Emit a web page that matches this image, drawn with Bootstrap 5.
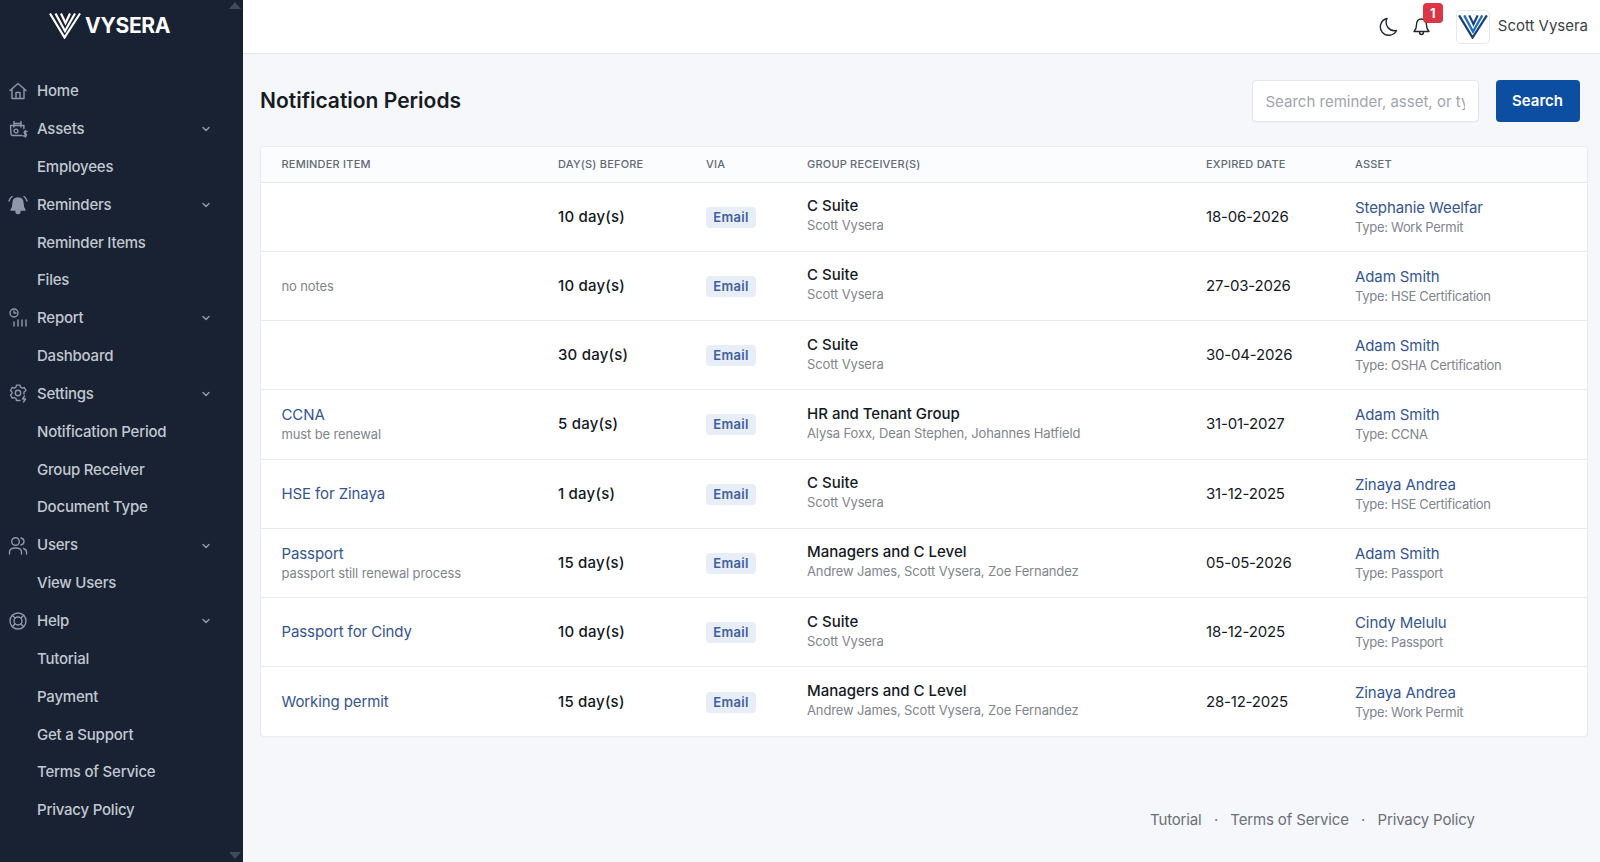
<!DOCTYPE html>
<html lang="en">
<head>
<meta charset="utf-8">
<title>Notification Periods</title>
<link href="https://cdn.jsdelivr.net/npm/bootstrap@5.3.0/dist/css/bootstrap.min.css" rel="stylesheet">
<style>
html,body{height:100%;overflow:hidden}
body{font-family:Inter,"Liberation Sans",sans-serif;background:#f5f7fb;color:#14181f;font-size:15px}
.shell{height:862px}
.side{width:243px;background:#182232;height:862px;flex:none;position:relative;overflow:hidden}
.brand{height:72.5px;padding:12px 0 0 49px;color:#fff;font-weight:700;font-size:21px;letter-spacing:-.3px;line-height:27px}
.brand svg{width:32px;height:27px;margin-right:4px}
.side-item{height:37.85px;padding-left:37px;color:#c2c8d1;font-weight:500;font-size:15px;letter-spacing:-.22px;position:relative;text-decoration:none}
.side-item .ico{position:absolute;left:8px;top:50%;transform:translateY(-50%);width:20px;height:20px;fill:none;stroke:#8d99aa;stroke-width:1.4;stroke-linecap:round;stroke-linejoin:round}
.side-item .chev{position:absolute;left:201px;top:50%;transform:translateY(-50%);width:10px;height:10px;fill:none;stroke:#8d99aa;stroke-width:1.5;stroke-linecap:round;stroke-linejoin:round}
.scroll-up,.scroll-down{position:absolute;left:229px;width:0;height:0;border-left:6px solid transparent;border-right:6px solid transparent}
.scroll-up{top:2px;border-bottom:7px solid #3f4a5b}
.scroll-down{bottom:3px;border-top:7px solid #3f4a5b}
.topbar{height:54px;background:#fff;border-bottom:1px solid #e1e5ea;padding-right:12px}
.top-ico{width:21px;height:21px;fill:none;stroke:#23282f;stroke-width:1.4;stroke-linecap:round;stroke-linejoin:round}
.bell-wrap{position:relative;margin-left:11px;width:21px;height:21px;line-height:0}
.red-tag{position:absolute;left:12px;top:-13.5px;width:20px;height:20px;background:#dc3545;color:#fff;border-radius:4px;font-size:13px;font-weight:700;line-height:20px;text-align:center}
.avatar-box{width:34px;height:34px;border:1px solid #e5e8ec;border-radius:5px;background:#fff;margin-left:24px;margin-right:8px}
.avatar-box svg{width:30px;height:25px}
.user-name{font-size:15px;color:#3a3f46;letter-spacing:-.02px}
.main-area{padding:0 13px 0 18px;position:relative}
.title-row{height:42px;margin:26px 0 25px;padding-right:7.5px}
.page-title{font-size:21px;font-weight:600;margin:0 0 0 -1px;color:#171b22}
.search-box{width:227px;height:42px;border:1px solid #e3e6ea;border-radius:4px;font-size:15px;padding:0 13px;color:#333;box-shadow:0 1px 2px rgba(0,0,0,.03)}
.search-box::placeholder{color:#a0a5ac}
.btn-go{width:84px;height:42px;background:#0b4ea2;color:#fff;font-weight:600;font-size:15px;border-radius:4px;margin-left:17px;border:0}
.btn-go:hover{background:#0b4ea2;color:#fff}
.sheet{border:0;border-radius:3px;box-shadow:0 0 0 1px #e9ecf0,0 1px 2px rgba(0,0,0,.08);background:#fff;overflow:hidden}
.grid-table{table-layout:fixed;margin:0;width:100%}
.grid-table th{background:#fbfcfd;height:35px;font-size:11px;font-weight:500;letter-spacing:.2px;text-transform:uppercase;color:#626a74;padding:0 0 0 20.5px;vertical-align:middle;border-bottom:1px solid #e4e7eb}
.grid-table td{height:69.25px;padding:0 0 0 20.5px;vertical-align:middle;border-bottom:1px solid #e9ecef;font-size:15px;color:#14181f;line-height:20px}
.grid-table tr:last-child td{border-bottom:0}
.w1{width:276.5px}.w2{width:148px}.w3{width:101px}.w4{width:399px}.w5{width:149px}
.t-link{color:#34558f;text-decoration:none;font-size:15px;display:block;letter-spacing:-.1px}
.t-sub{color:#80858c;font-size:13px;display:block;line-height:18px;letter-spacing:-.13px}
.t-type{letter-spacing:-.3px}
.t-days{font-weight:500;letter-spacing:.2px}
.t-date{letter-spacing:-.2px}
.t-group{font-weight:500;display:block}
.cell-up{padding-bottom:3px!important}
.mail-tag{display:inline-block;background:#e8eef7;color:#41609f;font-size:13px;font-weight:600;border-radius:4px;width:50px;height:21px;line-height:21px;text-align:center;letter-spacing:.3px;position:relative;top:.5px}
.foot{height:85px;padding-left:889px;color:#777c83;font-size:15px;padding-top:73px;letter-spacing:-.15px}
.foot a{color:#6b7077;text-decoration:none}
.foot span{margin:0 12.3px}
</style>
</head>
<body>
<div class="shell d-flex">
  <aside class="side">
    <span class="scroll-up"></span><span class="scroll-down"></span>
    <div class="brand d-flex align-items-start">
      <svg viewBox="0 0 32 27" fill="none" stroke="#fff" stroke-width="2.2"><path d="M1 1.500 15.500 25.500 31 1.500"/><path d="M6.500 1.500 16 19 26 1.500"/><path d="M12 1.500 16.500 11 21 1.500"/></svg>
      <span>VYSERA</span>
    </div>
    <nav class="d-flex flex-column">
      <a class="side-item d-flex align-items-center" href="#"><svg class="ico" viewBox="0 0 20 20"><path d="M2 9.500 10 2.500l8 7M4 8v9.500h12V8M8 17.500v-6h4v6"/></svg>Home</a>
      <a class="side-item d-flex align-items-center" href="#"><svg class="ico" viewBox="0 0 20 20"><path d="M14 16.500H5Q3 16.500 3 14.500L2.500 6.500H16L15.800 9.500M6 8V2.500M13 8V2.500M6 4.500H13"/><circle cx="8" cy="12" r="1.900"/><path d="M19 12.500h-2.300q-1 1 0 2.200h1.300q1 1 0 2.300H15.500M17.300 11.500v6.500"/></svg>Assets<svg class="chev" viewBox="0 0 10 10"><path d="M2 3.500 5 6.500 8 3.500"/></svg></a>
      <a class="side-item d-flex align-items-center" href="#">Employees</a>
      <a class="side-item d-flex align-items-center" href="#"><svg class="ico" viewBox="0 0 20 20" style="fill:#8d99aa"><path d="M10 3q5 0 5 5.500 0 4.500 2 6.500H3q2-2 2-6.500Q5 3 10 3ZM8 16.500h4Q12 18.500 10 18.500T8 16.500Z"/><path d="M1 6q.5-2.500 3-4.500M19 6q-.5-2.500-3-4.500" fill="none"/></svg>Reminders<svg class="chev" viewBox="0 0 10 10"><path d="M2 3.500 5 6.500 8 3.500"/></svg></a>
      <a class="side-item d-flex align-items-center" href="#">Reminder Items</a>
      <a class="side-item d-flex align-items-center" href="#">Files</a>
      <a class="side-item d-flex align-items-center" href="#"><svg class="ico" viewBox="0 0 20 20"><circle cx="6" cy="5" r="4"/><path d="M6 3v2h2M6 18v-4M10 18v-6M14 18v-6M18 18v-6"/></svg>Report<svg class="chev" viewBox="0 0 10 10"><path d="M2 3.500 5 6.500 8 3.500"/></svg></a>
      <a class="side-item d-flex align-items-center" href="#">Dashboard</a>
      <a class="side-item d-flex align-items-center" href="#"><svg class="ico" viewBox="0 0 20 20"><path d="M12 16.500H8.500l-.5-2-1.800-1-2 .6L2.500 11l1.500-1.500V8L2.500 6.500 4.200 3.500l2 .6 1.800-1 .5-2h3.500l.5 2 1.800 1 2-.6 1.700 3L16 8v2"/><circle cx="10" cy="9" r="2.700"/><path d="M16.500 12l-2 3h3l-2 3"/></svg>Settings<svg class="chev" viewBox="0 0 10 10"><path d="M2 3.500 5 6.500 8 3.500"/></svg></a>
      <a class="side-item d-flex align-items-center" href="#">Notification Period</a>
      <a class="side-item d-flex align-items-center" href="#">Group Receiver</a>
      <a class="side-item d-flex align-items-center" href="#">Document Type</a>
      <a class="side-item d-flex align-items-center" href="#"><svg class="ico" viewBox="0 0 20 20"><circle cx="7.500" cy="5.500" r="3.800"/><path d="M1.500 18v-2q0-4 6-4t6 4v2M13 2q3 .8 3 3.500T13 9M15.500 12.500q3 1 3 3.500v2"/></svg>Users<svg class="chev" viewBox="0 0 10 10"><path d="M2 3.500 5 6.500 8 3.500"/></svg></a>
      <a class="side-item d-flex align-items-center" href="#">View Users</a>
      <a class="side-item d-flex align-items-center" href="#"><svg class="ico" viewBox="0 0 20 20"><circle cx="10" cy="10" r="8"/><circle cx="10" cy="10" r="4"/><path d="m4.300 4.300 2.900 2.900M15.700 4.300l-2.900 2.900M4.300 15.700l2.900-2.900M15.700 15.700l-2.900-2.900"/></svg>Help<svg class="chev" viewBox="0 0 10 10"><path d="M2 3.500 5 6.500 8 3.500"/></svg></a>
      <a class="side-item d-flex align-items-center" href="#">Tutorial</a>
      <a class="side-item d-flex align-items-center" href="#">Payment</a>
      <a class="side-item d-flex align-items-center" href="#">Get a Support</a>
      <a class="side-item d-flex align-items-center" href="#">Terms of Service</a>
      <a class="side-item d-flex align-items-center" href="#">Privacy Policy</a>
    </nav>
  </aside>
  <div class="flex-grow-1 d-flex flex-column" style="min-width:0">
    <header class="topbar d-flex align-items-center justify-content-end">
      <svg class="top-ico" viewBox="0 0 21 21"><path d="M17.500 14.500A8.500 8.500 0 0 1 8 2.500a8.500 8.500 0 1 0 9.500 12Z"/></svg>
      <div class="bell-wrap">
        <svg class="top-ico" viewBox="0 0 21 21"><path d="M10.500 3q-5 0-5 6 0 4-2.500 6.500h15q-2.500-2.500-2.500-6.500 0-6-5-6ZM8.500 16q0 2.500 2 2.500t2-2.500"/></svg>
        <span class="red-tag">1</span>
      </div>
      <div class="avatar-box d-flex align-items-center justify-content-center">
        <svg viewBox="0 0 32 27" fill="none" stroke-width="2.400"><path d="M1 1.500 15.500 25.500 31 1.500" stroke="#1c3f77"/><path d="M6.500 1.500 16 19 26 1.500" stroke="#1d6fc2"/><path d="M12 1.500 16.500 11 21 1.500" stroke="#1c3f77"/></svg>
      </div>
      <span class="user-name">Scott Vysera</span>
    </header>
    <main class="main-area flex-grow-1">
      <div class="title-row d-flex align-items-center justify-content-between">
        <h1 class="page-title">Notification Periods</h1>
        <form class="d-flex" onsubmit="return false">
          <input class="form-control search-box" placeholder="Search reminder, asset, or type">
          <button class="btn btn-go">Search</button>
        </form>
      </div>
      <div class="card sheet">
        <table class="table grid-table">
          <colgroup><col class="w1"><col class="w2"><col class="w3"><col class="w4"><col class="w5"><col></colgroup>
          <thead><tr><th>Reminder Item</th><th>Day(s) Before</th><th>Via</th><th>Group Receiver(s)</th><th>Expired Date</th><th>Asset</th></tr></thead>
          <tbody>
            <tr><td></td><td class="t-days">10 day(s)</td><td><span class="mail-tag">Email</span></td><td class="cell-up"><span class="t-group">C Suite</span><span class="t-sub">Scott Vysera</span></td><td class="t-date">18-06-2026</td><td><a class="t-link" href="#">Stephanie Weelfar</a><span class="t-sub t-type">Type: Work Permit</span></td></tr>
            <tr><td><span class="t-sub">no notes</span></td><td class="t-days">10 day(s)</td><td><span class="mail-tag">Email</span></td><td class="cell-up"><span class="t-group">C Suite</span><span class="t-sub">Scott Vysera</span></td><td class="t-date">27-03-2026</td><td><a class="t-link" href="#">Adam Smith</a><span class="t-sub t-type">Type: HSE Certification</span></td></tr>
            <tr><td></td><td class="t-days">30 day(s)</td><td><span class="mail-tag">Email</span></td><td class="cell-up"><span class="t-group">C Suite</span><span class="t-sub">Scott Vysera</span></td><td class="t-date">30-04-2026</td><td><a class="t-link" href="#">Adam Smith</a><span class="t-sub t-type">Type: OSHA Certification</span></td></tr>
            <tr><td><a class="t-link" href="#">CCNA</a><span class="t-sub">must be renewal</span></td><td class="t-days">5 day(s)</td><td><span class="mail-tag">Email</span></td><td class="cell-up"><span class="t-group">HR and Tenant Group</span><span class="t-sub">Alysa Foxx, Dean Stephen, Johannes Hatfield</span></td><td class="t-date">31-01-2027</td><td><a class="t-link" href="#">Adam Smith</a><span class="t-sub t-type">Type: CCNA</span></td></tr>
            <tr><td><a class="t-link" href="#">HSE for Zinaya</a></td><td class="t-days">1 day(s)</td><td><span class="mail-tag">Email</span></td><td class="cell-up"><span class="t-group">C Suite</span><span class="t-sub">Scott Vysera</span></td><td class="t-date">31-12-2025</td><td><a class="t-link" href="#">Zinaya Andrea</a><span class="t-sub t-type">Type: HSE Certification</span></td></tr>
            <tr><td><a class="t-link" href="#">Passport</a><span class="t-sub">passport still renewal process</span></td><td class="t-days">15 day(s)</td><td><span class="mail-tag">Email</span></td><td class="cell-up"><span class="t-group">Managers and C Level</span><span class="t-sub">Andrew James, Scott Vysera, Zoe Fernandez</span></td><td class="t-date">05-05-2026</td><td><a class="t-link" href="#">Adam Smith</a><span class="t-sub t-type">Type: Passport</span></td></tr>
            <tr><td><a class="t-link" href="#">Passport for Cindy</a></td><td class="t-days">10 day(s)</td><td><span class="mail-tag">Email</span></td><td class="cell-up"><span class="t-group">C Suite</span><span class="t-sub">Scott Vysera</span></td><td class="t-date">18-12-2025</td><td><a class="t-link" href="#">Cindy Melulu</a><span class="t-sub t-type">Type: Passport</span></td></tr>
            <tr><td><a class="t-link" href="#">Working permit</a></td><td class="t-days">15 day(s)</td><td><span class="mail-tag">Email</span></td><td class="cell-up"><span class="t-group">Managers and C Level</span><span class="t-sub">Andrew James, Scott Vysera, Zoe Fernandez</span></td><td class="t-date">28-12-2025</td><td><a class="t-link" href="#">Zinaya Andrea</a><span class="t-sub t-type">Type: Work Permit</span></td></tr>
          </tbody>
        </table>
      </div>
      <footer class="foot"><a href="#">Tutorial</a><span>·</span><a href="#">Terms of Service</a><span>·</span><a href="#">Privacy Policy</a></footer>
    </main>
  </div>
</div>
<script src="https://cdn.jsdelivr.net/npm/bootstrap@5.3.0/dist/js/bootstrap.bundle.min.js"></script>
</body>
</html>
